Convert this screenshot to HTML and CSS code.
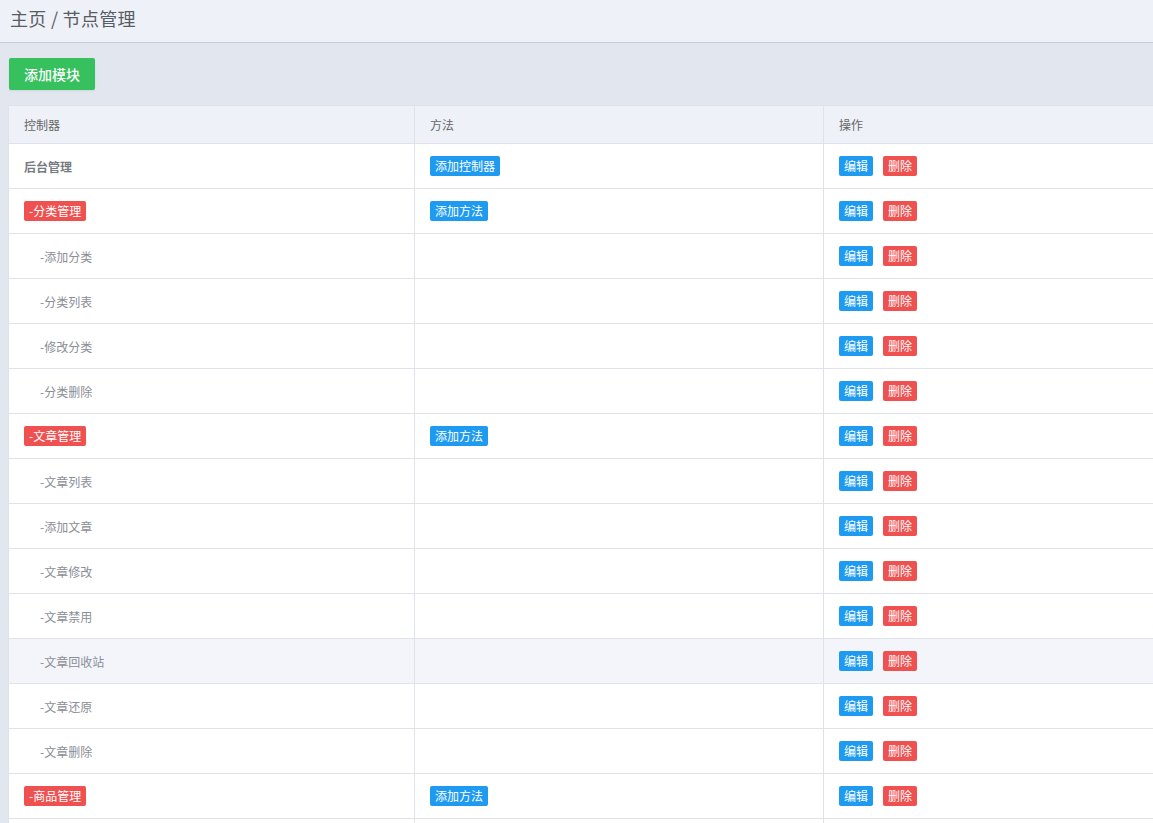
FILE: index.html
```html
<!DOCTYPE html>
<html lang="zh-CN">
<head>
<meta charset="utf-8">
<title>节点管理</title>
<link rel="stylesheet" href="styles.css">
</head>
<body>
<div class="crumb">主页 / 节点管理</div>
<div class="main">
  <div class="toolbar"><button class="btn-green">添加模块</button></div>
  <table class="grid">
    <colgroup><col class="c1"><col class="c2"><col></colgroup>
    <thead>
      <tr><th>控制器</th><th>方法</th><th>操作</th></tr>
    </thead>
    <tbody>
      <tr><td class="root">后台管理</td><td><span class="tag blue">添加控制器</span></td><td><span class="tag blue">编辑</span><span class="tag red">删除</span></td></tr>
      <tr><td><span class="tag red">-分类管理</span></td><td><span class="tag blue">添加方法</span></td><td><span class="tag blue">编辑</span><span class="tag red">删除</span></td></tr>
      <tr><td class="sub">-添加分类</td><td></td><td><span class="tag blue">编辑</span><span class="tag red">删除</span></td></tr>
      <tr><td class="sub">-分类列表</td><td></td><td><span class="tag blue">编辑</span><span class="tag red">删除</span></td></tr>
      <tr><td class="sub">-修改分类</td><td></td><td><span class="tag blue">编辑</span><span class="tag red">删除</span></td></tr>
      <tr><td class="sub">-分类删除</td><td></td><td><span class="tag blue">编辑</span><span class="tag red">删除</span></td></tr>
      <tr><td><span class="tag red">-文章管理</span></td><td><span class="tag blue">添加方法</span></td><td><span class="tag blue">编辑</span><span class="tag red">删除</span></td></tr>
      <tr><td class="sub">-文章列表</td><td></td><td><span class="tag blue">编辑</span><span class="tag red">删除</span></td></tr>
      <tr><td class="sub">-添加文章</td><td></td><td><span class="tag blue">编辑</span><span class="tag red">删除</span></td></tr>
      <tr><td class="sub">-文章修改</td><td></td><td><span class="tag blue">编辑</span><span class="tag red">删除</span></td></tr>
      <tr><td class="sub">-文章禁用</td><td></td><td><span class="tag blue">编辑</span><span class="tag red">删除</span></td></tr>
      <tr class="hover"><td class="sub">-文章回收站</td><td></td><td><span class="tag blue">编辑</span><span class="tag red">删除</span></td></tr>
      <tr><td class="sub">-文章还原</td><td></td><td><span class="tag blue">编辑</span><span class="tag red">删除</span></td></tr>
      <tr><td class="sub">-文章删除</td><td></td><td><span class="tag blue">编辑</span><span class="tag red">删除</span></td></tr>
      <tr><td><span class="tag red">-商品管理</span></td><td><span class="tag blue">添加方法</span></td><td><span class="tag blue">编辑</span><span class="tag red">删除</span></td></tr>
      <tr><td class="sub">-商品列表</td><td></td><td><span class="tag blue">编辑</span><span class="tag red">删除</span></td></tr>
    </tbody>
  </table>
</div>
</body>
</html>
```

FILE: styles.css
```css
html, body {
  margin: 0;
  padding: 0;
  background: #e2e6ee;
  font-family: "Noto Sans CJK SC", "Noto Sans", sans-serif;
  overflow: hidden;
}

.crumb {
  height: 42px;
  line-height: 37px;
  padding-left: 10px;
  font-size: 18px;
  letter-spacing: 0.3px;
  color: #585c63;
  background: #eef1f8;
  border-bottom: 1px solid #c9cdd5;
}

.main {
  padding: 15px 0 0 8px;
}

.toolbar {
  padding-left: 1px;
  margin-bottom: 15px;
}

.btn-green {
  display: block;
  width: 86px;
  height: 32px;
  border: none;
  border-radius: 2px;
  background: #36c05e;
  color: #fff;
  font-family: inherit;
  font-size: 14px;
  font-weight: 500;
  padding: 0;
  box-shadow: 0 1px 2px rgba(0,0,0,0.08);
}

.grid {
  width: 100%;
  border-collapse: collapse;
  table-layout: fixed;
  background: #fff;
  font-size: 12px;
}

.c1 { width: 406px; }
.c2 { width: 409px; }

.grid th, .grid td {
  text-align: left;
  border: 1px solid #dfe2e8;
  padding: 0 0 0 15px;
  white-space: nowrap;
}

.grid tr > :last-child { border-right: none; }

.grid th {
  height: 37px;
  background: #eef1f7;
  font-weight: normal;
  color: #666;
}

.grid td {
  height: 44px;
  color: #666;
}

.grid td.root {
  font-weight: 600;
  color: #767a82;
}

.grid td.sub {
  padding-left: 31px;
  color: #8a8e95;
}

.grid tr.hover td {
  background: #f3f5fa;
}

.tag {
  display: inline-block;
  height: 20px;
  line-height: 20px;
  padding: 0 5px;
  border-radius: 2px;
  color: #fff;
  font-size: 12px;
  vertical-align: middle;
}

.tag + .tag { margin-left: 10px; }

.blue { background: #1e9bf0; }
.red { background: #ef5050; }
```
